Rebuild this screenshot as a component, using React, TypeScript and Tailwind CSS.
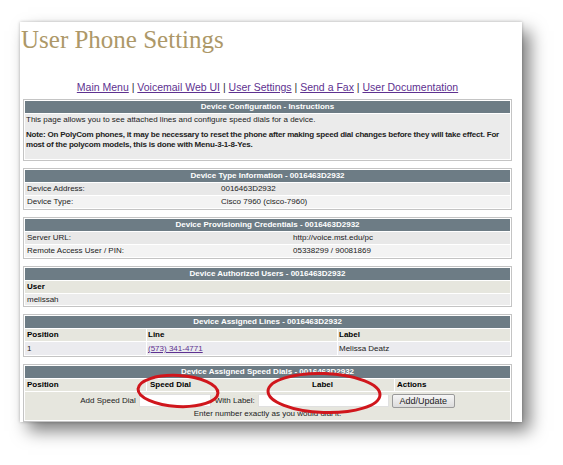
import React from "react";

const SANS = "font-['Liberation_Sans',Arial,sans-serif]";

function Box({ title, children }: { title: string; children: React.ReactNode }) {
  return (
    <div className="border border-[#c4c4c4] p-[1px] flex flex-col gap-[1px] bg-white">
      <div className="h-[12px] bg-[#6d7c85] text-white font-bold text-[8px] leading-[12px] text-center">
        {title}
      </div>
      {children}
    </div>
  );
}

function KV({ label, value, shade, split }: { label: string; value: string; shade: string; split: string }) {
  return (
    <div className={`grid ${split} h-[12px] leading-[12px] text-[8px] text-[#222] ${shade}`}>
      <span className="pl-[2px]">{label}</span>
      <span>{value}</span>
    </div>
  );
}

function Link({ children }: { children: React.ReactNode }) {
  return <a className="text-[#5e3190] underline">{children}</a>;
}

export default function App() {
  const nav = ["Main Menu", "Voicemail Web UI", "User Settings", "Send a Fax", "User Documentation"];
  return (
    <div className={`relative w-[563px] h-[465px] bg-white overflow-hidden ${SANS}`}>
      <div className="ml-[20px] mt-[22px] w-[502px] h-[400px] bg-white shadow-[8px_9px_16px_rgba(0,0,0,0.5),0_0_3px_rgba(0,0,0,0.25)] pl-[3px] pr-[10px]">
        <h1 className="font-['Liberation_Serif',Georgia,serif] text-[#ad9868] text-[25px] leading-[30px] pt-[3px] -ml-[2px]">
          User Phone Settings
        </h1>
        <div className="mt-[25px] text-center text-[10.5px] leading-[14px] text-[#333]">
          {nav.map((n, i) => (
            <React.Fragment key={n}>
              {i > 0 && <span> | </span>}
              <Link>{n}</Link>
            </React.Fragment>
          ))}
        </div>
        <div className="mt-[5px] flex flex-col gap-[7px]">
          <Box title="Device Configuration - Instructions">
            <div className="bg-[#ebebeb] h-[45px] px-[1px] text-[8px] text-[#222]">
              <p className="leading-[11px]">This page allows you to see attached lines and configure speed dials for a device.</p>
              <p className="mt-[5px] font-bold leading-[10px] tracking-[-0.2px]">
                Note: On PolyCom phones, it may be necessary to reset the phone after making speed dial changes before they will take effect. For most of the polycom models, this is done with Menu-3-1-8-Yes.
              </p>
            </div>
          </Box>
          <Box title="Device Type Information - 0016463D2932">
            <KV label="Device Address:" value="0016463D2932" shade="bg-[#e8e8e8]" split="grid-cols-[196px_1fr]" />
            <KV label="Device Type:" value="Cisco 7960 (cisco-7960)" shade="bg-[#f3f3f3]" split="grid-cols-[196px_1fr]" />
          </Box>
          <Box title="Device Provisioning Credentials - 0016463D2932">
            <KV label="Server URL:" value="http://voice.mst.edu/pc" shade="bg-[#e8e8e8]" split="grid-cols-[268px_1fr]" />
            <KV label="Remote Access User / PIN:" value="05338299 / 90081869" shade="bg-[#f3f3f3]" split="grid-cols-[268px_1fr]" />
          </Box>
          <Box title="Device Authorized Users - 0016463D2932">
            <div className="h-[12px] leading-[12px] text-[8px] font-bold text-black bg-[#e6e6de] pl-[2px]">User</div>
            <div className="h-[11px] leading-[11px] text-[8px] text-[#222] bg-[#ececec] pl-[2px]">melissah</div>
          </Box>
          <Box title="Device Assigned Lines - 0016463D2932">
            <div className="grid grid-cols-[121px_190px_1fr] gap-x-[1px] h-[12px] leading-[12px] text-[8px] font-bold text-black">
              <span className="bg-[#e6e6de] pl-[2px]">Position</span>
              <span className="bg-[#e6e6de] pl-[1px]">Line</span>
              <span className="bg-[#e6e6de] pl-[1px]">Label</span>
            </div>
            <div className="grid grid-cols-[121px_190px_1fr] gap-x-[1px] h-[13px] leading-[13px] text-[8px] text-[#222]">
              <span className="bg-[#ebebef] pl-[2px]">1</span>
              <span className="bg-[#ebebef] pl-[1px]"><Link>(573) 341-4771</Link></span>
              <span className="bg-[#ebebef] pl-[1px]">Melissa Deatz</span>
            </div>
          </Box>
          <Box title="Device Assigned Speed Dials - 0016463D2932">
            <div className="grid grid-cols-[121px_247px_1fr] gap-x-[1px] h-[12px] leading-[12px] text-[8px] font-bold text-black">
              <span className="bg-[#e6e6de] pl-[2px]">Position</span>
              <span className="bg-[#e6e6de] flex justify-between pl-[3px] pr-[61px]">
                <span>Speed Dial</span>
                <span>Label</span>
              </span>
              <span className="bg-[#e6e6de] pl-[2px]">Actions</span>
            </div>
            <div className="bg-[#e6e6de] flex flex-col items-center text-[8px] text-[#222] pb-[1px]">
              <div className="flex items-center h-[17px] gap-[3px]">
                <span>Add Speed Dial</span>
                <span className="w-[72px] h-[13px] bg-white border border-[#e0e0e0]" />
                <span className="ml-[1px]">With Label:</span>
                <span className="w-[131px] h-[13px] bg-white border border-[#e0e0e0]" />
                <button className="h-[14px] w-[63px] rounded-[2px] border border-[#9a9a9a] bg-gradient-to-b from-[#f6f6f6] to-[#dcdcdc] text-[9px] leading-[12px] text-[#222]">
                  Add/Update
                </button>
              </div>
              <div className="leading-[10px] h-[10px]">Enter number exactly as you would dial it.</div>
            </div>
          </Box>
        </div>
      </div>
      <svg className="absolute inset-0 pointer-events-none" width="563" height="465" viewBox="0 0 563 465">
        <ellipse cx="178" cy="391" rx="40" ry="15.5" transform="rotate(3 178 391)" fill="none" stroke="#d0161c" strokeWidth="3" />
        <ellipse cx="324" cy="393" rx="56" ry="19.5" transform="rotate(2 324 393)" fill="none" stroke="#d0161c" strokeWidth="3" />
      </svg>
    </div>
  );
}
